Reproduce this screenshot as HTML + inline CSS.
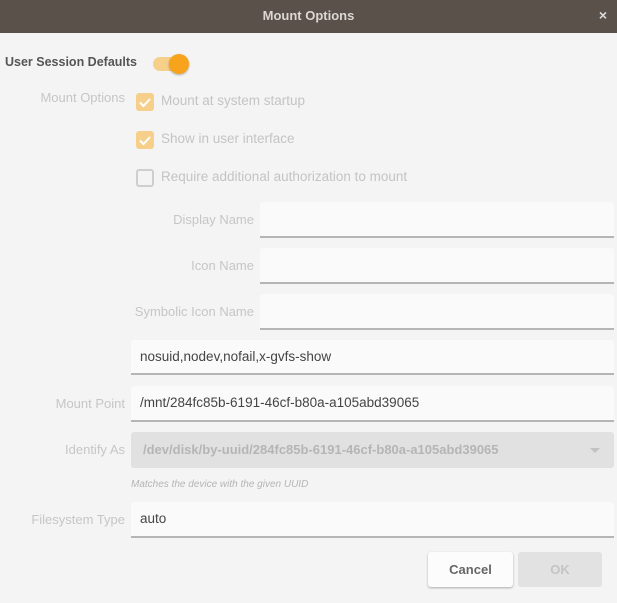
<!DOCTYPE html>
<html><head><style>
*{margin:0;padding:0;box-sizing:border-box}
body{width:617px;height:603px;background:#f4f4f4;font-family:"Liberation Sans",sans-serif;font-size:13.5px;position:relative;overflow:hidden;color:#4a4a4a}
.abs{position:absolute}
.title{left:0;top:0;width:617px;height:33px;background:#5a514b;color:#ddd7d2;font-weight:bold;font-size:13px;text-align:center;line-height:31px}
.x{right:10px;top:0;line-height:31px;color:#ddd;font-size:14px;font-weight:bold}
.lbl{color:#c6c6c6;text-align:right;font-size:13px}
.entry{background:#fafafa;border-bottom:2px solid #b5b5b5;border-radius:3px 3px 0 0;padding-left:9px;line-height:34px;color:#444}
.cb{width:18px;height:18px;border-radius:3px}
.chk{color:#c4c4c4}
</style></head><body>
<div class="abs title">Mount Options</div>
<div class="abs x">×</div>
<div class="abs" style="left:5px;top:55px;font-weight:bold;color:#555;font-size:12.5px">User Session Defaults</div>
<div class="abs" style="left:153px;top:57px;width:34px;height:14px;border-radius:7px;background:#f6cf8a"></div>
<div class="abs" style="left:169px;top:54px;width:20px;height:20px;border-radius:50%;background:#f8a31c;box-shadow:0 1px 2px rgba(0,0,0,.3)"></div>
<div class="abs lbl" style="left:20px;width:105px;top:90px">Mount Options</div>

<div class="abs cb" style="left:136px;top:93px;background:#f6cf8a"><svg width="18" height="18"><path d="M4 9.5l3.5 3.5 6.5-7" stroke="#fff" stroke-width="2" fill="none"/></svg></div>
<div class="abs chk" style="left:161px;top:93px">Mount at system startup</div>
<div class="abs cb" style="left:136px;top:131px;background:#f6cf8a"><svg width="18" height="18"><path d="M4 9.5l3.5 3.5 6.5-7" stroke="#fff" stroke-width="2" fill="none"/></svg></div>
<div class="abs chk" style="left:161px;top:131px">Show in user interface</div>
<div class="abs cb" style="left:136px;top:169px;border:2px solid #cfcfcf"></div>
<div class="abs chk" style="left:161px;top:169px">Require additional authorization to mount</div>

<div class="abs lbl" style="left:100px;width:154px;top:212px">Display Name</div>
<div class="abs entry" style="left:260px;top:202px;width:354px;height:36px"></div>
<div class="abs lbl" style="left:100px;width:154px;top:258px">Icon Name</div>
<div class="abs entry" style="left:260px;top:248px;width:354px;height:36px"></div>
<div class="abs lbl" style="left:100px;width:154px;top:304px">Symbolic Icon Name</div>
<div class="abs entry" style="left:260px;top:294px;width:354px;height:36px"></div>
<div class="abs entry" style="left:131px;top:340px;width:483px;height:35px">nosuid,nodev,nofail,x-gvfs-show</div>
<div class="abs lbl" style="left:10px;width:115px;top:396px">Mount Point</div>
<div class="abs entry" style="left:131px;top:386px;width:483px;height:36px">/mnt/284fc85b-6191-46cf-b80a-a105abd39065</div>
<div class="abs lbl" style="left:10px;width:115px;top:442px">Identify As</div>
<div class="abs" style="left:131px;top:432px;width:483px;height:36px;background:#e1e1e1;border-radius:3px;padding-left:12px;line-height:36px;color:#b5b5b5;font-weight:bold;font-size:13px">/dev/disk/by-uuid/284fc85b-6191-46cf-b80a-a105abd39065</div>
<div class="abs" style="left:590px;top:448px;width:0;height:0;border-left:5px solid transparent;border-right:5px solid transparent;border-top:5px solid #c2c2c2"></div>
<div class="abs" style="left:131px;top:479px;font-size:10px;font-style:italic;color:#b5b5b5">Matches the device with the given UUID</div>
<div class="abs lbl" style="left:10px;width:115px;top:512px">Filesystem Type</div>
<div class="abs entry" style="left:131px;top:502px;width:483px;height:36px">auto</div>
<div class="abs" style="left:428px;top:552px;width:85px;height:35px;background:#fcfcfc;border-radius:3px;box-shadow:0 1px 2px rgba(0,0,0,.3);text-align:center;line-height:35px;color:#666;font-weight:bold;font-size:13px">Cancel</div>
<div class="abs" style="left:518px;top:552px;width:84px;height:35px;background:#e2e2e2;border-radius:3px;text-align:center;line-height:35px;color:#c4c4c4;font-weight:bold;font-size:13px">OK</div>
</body></html>
